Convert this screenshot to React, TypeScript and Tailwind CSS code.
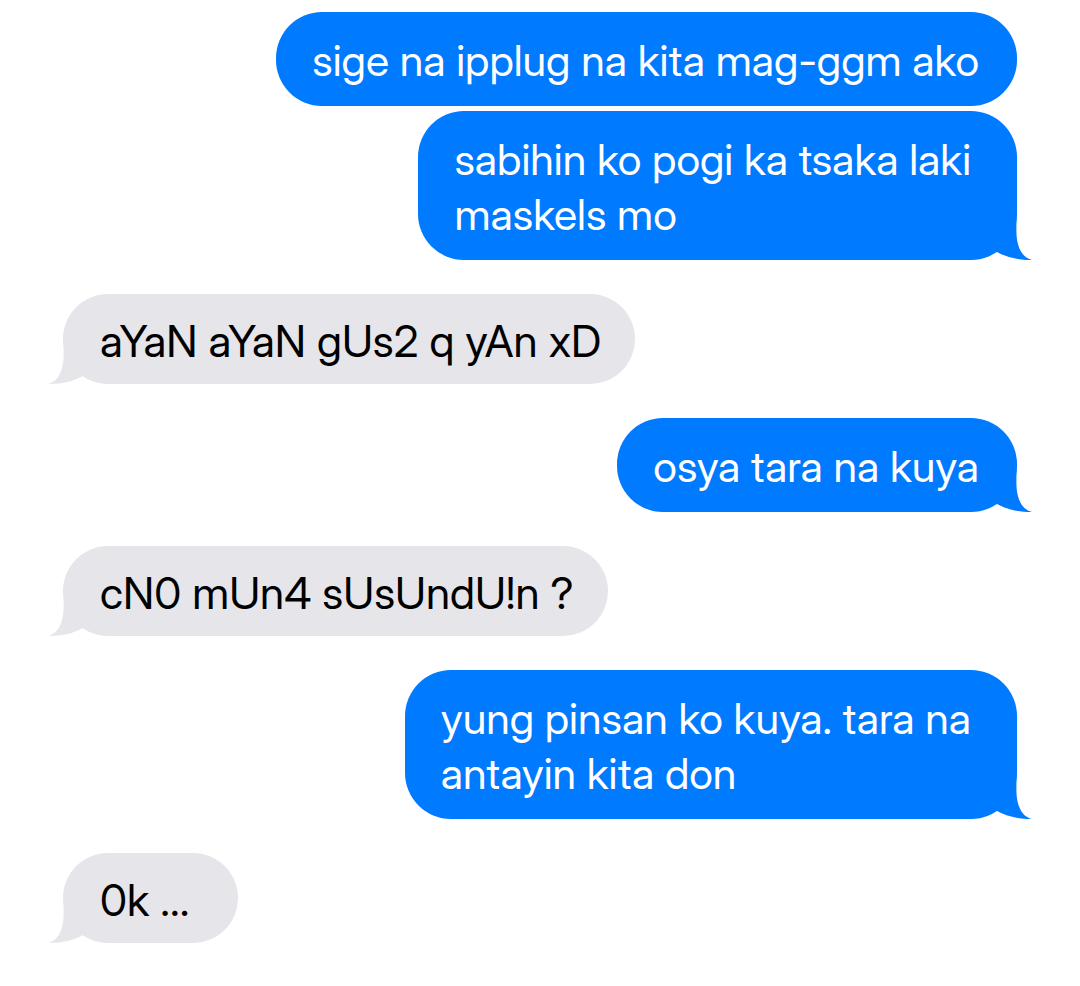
type Message = { side: "sent" | "received"; lines: string[]; tail: boolean; grouped?: boolean };

const messages: Message[] = [
  { side: "sent", lines: ["sige na ipplug na kita mag-ggm ako"], tail: false },
  { side: "sent", lines: ["sabihin ko pogi ka tsaka laki", "maskels mo"], tail: true, grouped: true },
  { side: "received", lines: ["aYaN aYaN gUs2 q yAn xD"], tail: true },
  { side: "sent", lines: ["osya tara na kuya"], tail: true },
  { side: "received", lines: ["cN0 mUn4 sUsUndU!n ?"], tail: true },
  { side: "sent", lines: ["yung pinsan ko kuya. tara na", "antayin kita don"], tail: true },
  { side: "received", lines: ["0k ..."], tail: true },
];

function Tail({ side }: { side: Message["side"] }) {
  return (
    <svg
      aria-hidden="true"
      viewBox="0 0 40 46"
      className={
        side === "sent"
          ? "absolute -right-[15px] bottom-0 h-[46px] w-10 fill-[#007aff]"
          : "absolute -left-[15px] bottom-0 h-[46px] w-10 -scale-x-100 fill-[#e5e5ea]"
      }
    >
      <path d="M0 0H24.4V17C24.4 31 29 43.500 40 46C25 46 14 43 5 38L0 38Z" />
    </svg>
  );
}

function Bubble({ message }: { message: Message }) {
  const sent = message.side === "sent";
  const wrapped = message.lines.length > 1;
  return (
    <li className={`flex ${sent ? "justify-end" : "justify-start"} ${message.grouped ? "mt-[5px]" : "mt-[34px] first:mt-0"}`}>
      <div
        className={
          sent
            ? `relative rounded-[46px] bg-[#007aff] pt-[21px] pb-[18px] pl-[36px] text-[43px] leading-[55px] text-white ${wrapped ? "pr-[46px]" : "pr-[38px]"}`
            : "relative min-w-[175px] rounded-[46px] bg-[#e5e5ea] pt-[20px] pr-[34px] pb-[15px] pl-[37px] text-[44px] leading-[55px] text-black"
        }
      >
        {message.tail && <Tail side={message.side} />}
        <p className="relative">
          {message.lines.map((line) => (
            <span key={line} className="block">{line}</span>
          ))}
        </p>
      </div>
    </li>
  );
}

export default function App() {
  return (
    <main className="min-h-screen bg-white pt-3 pr-[63px] pb-10 pl-[63px] font-['Inter_Display','Inter',sans-serif]">
      <ul className="flex flex-col">
        {messages.map((message) => (
          <Bubble key={message.lines[0]} message={message} />
        ))}
      </ul>
    </main>
  );
}
